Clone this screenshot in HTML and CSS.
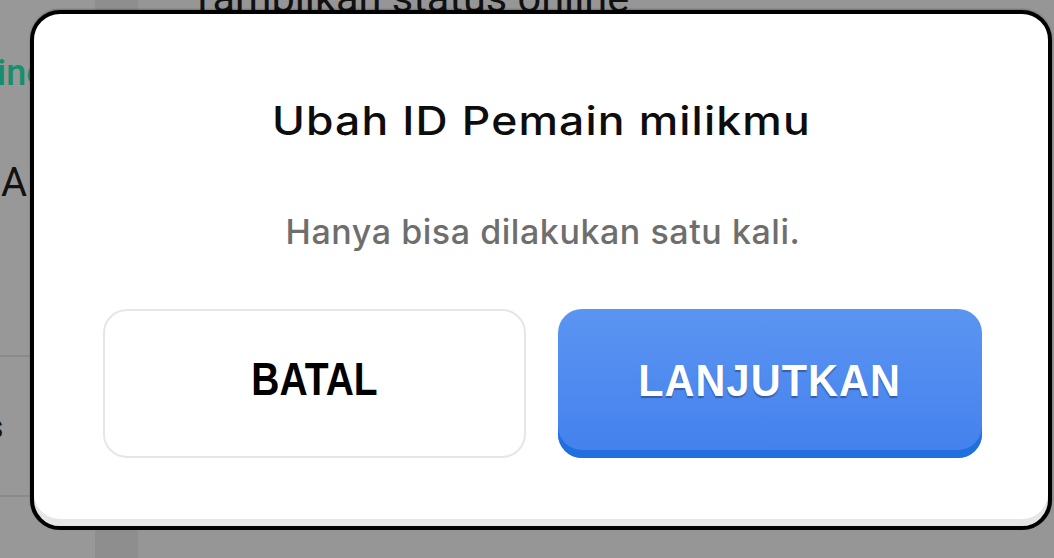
FILE: index.html
```html
<!DOCTYPE html>
<html lang="id">
<head>
<meta charset="utf-8">
<title>Ubah ID Pemain</title>
<link rel="stylesheet" href="styles.css">
</head>
<body>
<div class="page">
  <aside class="sidebar">
    <div class="side-row side-row--status"><span class="side-status">Online</span></div>
    <div class="side-row side-row--letter"><span class="side-letter">A</span></div>
    <div class="side-row side-row--small"><span class="side-small">s</span></div>
    <div class="side-row side-row--last"></div>
  </aside>
  <div class="strip"></div>
  <main class="content">
    <h2 class="content-title">Tampilkan status online</h2>
  </main>

  <div class="modal" role="dialog" aria-labelledby="modal-title">
    <h1 class="modal-title" id="modal-title">Ubah ID Pemain milikmu</h1>
    <p class="modal-text">Hanya bisa dilakukan satu kali.</p>
    <div class="modal-actions">
      <button class="btn btn--cancel" type="button"><span class="btn-label">BATAL</span></button>
      <button class="btn btn--primary" type="button"><span class="btn-label btn-label--primary">LANJUTKAN</span></button>
    </div>
  </div>
</div>
</body>
</html>
```

FILE: styles.css
```css
* { box-sizing: border-box; }

html, body {
  margin: 0;
  padding: 0;
}

body {
  width: 1054px;
  height: 558px;
  overflow: hidden;
  background: #969696;
  font-family: Inter, "Noto Sans", sans-serif;
}

.page {
  position: relative;
  display: flex;
  width: 1054px;
  height: 558px;
  background: #969696;
}

/* ---- dimmed page beneath the dialog ---- */
.sidebar {
  width: 95px;
  display: flex;
  flex-direction: column;
  background: #989898;
  overflow: hidden;
}

.side-row {
  display: flex;
  align-items: center;
  border-bottom: 2px solid #8a8a8a;
}

.side-row--status {
  height: 60px;
  margin-top: 46px;
  border-bottom: none;
  align-items: flex-start;
  white-space: nowrap;
}

.side-status {
  font-family: Roboto, sans-serif;
  font-weight: 500;
  font-size: 36px;
  color: #158f6c;
  margin-left: -57px;
  margin-top: 6px;
  line-height: 42px;
}

.side-row--letter {
  height: 251px;
  align-items: flex-start;
}

.side-letter {
  font-family: Roboto, sans-serif;
  font-size: 40px;
  color: #111;
  margin-top: 53px;
  margin-left: 1px;
  line-height: 48px;
}

.side-row--small {
  height: 140px;
}

.side-small {
  font-family: Roboto, sans-serif;
  font-size: 34px;
  color: #111;
  margin-left: -14px;
}

.side-row--last {
  flex: 1;
  border-bottom: none;
}

.strip {
  width: 43px;
  background: #8e8e8e;
}

.content {
  flex: 1;
  overflow: hidden;
}

.content-title {
  margin: -24px 0 0 52px;
  font-family: Roboto, sans-serif;
  font-weight: 400;
  font-size: 41.5px;
  line-height: 44px;
  color: #111;
  white-space: nowrap;
}

/* ---- dialog ---- */
.modal {
  position: absolute;
  left: 30px;
  top: 10px;
  width: 1022px;
  height: 520px;
  border: 4px solid #000;
  border-radius: 30px;
  background: #fff;
  box-shadow: inset 0 -7px 0 #e6e6e6, 0 -1px 2px rgba(0, 0, 0, 0.25);
  display: flex;
  flex-direction: column;
  align-items: center;
  padding-top: 84px;
}

.modal-title {
  margin: 0;
  font-family: Inter, sans-serif;
  font-weight: 500;
  font-size: 39px;
  line-height: 46px;
  letter-spacing: 1px;
  color: #0d0d0d;
  white-space: nowrap;
  transform: scaleX(1.14);
}

.modal-text {
  margin: 68px 0 0;
  font-family: Inter, sans-serif;
  font-weight: 500;
  font-size: 34px;
  line-height: 40px;
  letter-spacing: 0.55px;
  color: #6e6e6e;
  transform: translateX(2px);
}

.modal-actions {
  display: flex;
  gap: 32px;
  margin-top: 57px;
  align-self: flex-start;
  margin-left: 69px;
}

.btn {
  width: 423px;
  height: 149px;
  border-radius: 24px;
  display: flex;
  align-items: center;
  justify-content: center;
  padding: 0;
  cursor: pointer;
  font-family: "Liberation Sans", Arial, sans-serif;
  font-weight: 700;
  font-size: 38px;
}

.btn--cancel {
  background: #fff;
  border: 2px solid #e6e6e6;
  color: #000;
  font-size: 39px;
  padding-bottom: 8px;
}

.btn--primary {
  width: 424px;
  border: none;
  background: linear-gradient(#5b95f2, #4380ec);
  box-shadow: inset 0 -8px 0 #1f6fdf;
  color: #fff;
  padding-bottom: 5px;
}

.btn-label {
  display: inline-block;
  transform: scaleY(1.17);
}

.btn-label--primary {
  letter-spacing: 1px;
  transform: scale(1.09, 1.17);
  text-shadow: 0 2px 1px rgba(20, 40, 90, 0.45);
}
```
